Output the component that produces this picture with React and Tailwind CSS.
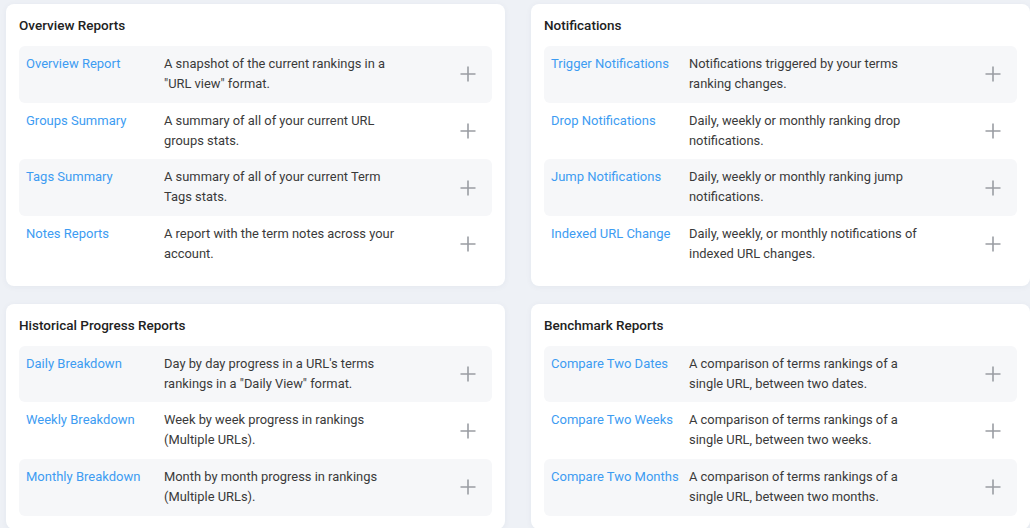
const sections = [
  {
    title: "Overview Reports",
    rows: [
      ["Overview Report", ["A snapshot of the current rankings in a", '"URL view" format.']],
      ["Groups Summary", ["A summary of all of your current URL", "groups stats."]],
      ["Tags Summary", ["A summary of all of your current Term", "Tags stats."]],
      ["Notes Reports", ["A report with the term notes across your", "account."]],
    ],
  },
  {
    title: "Notifications",
    rows: [
      ["Trigger Notifications", ["Notifications triggered by your terms", "ranking changes."]],
      ["Drop Notifications", ["Daily, weekly or monthly ranking drop", "notifications."]],
      ["Jump Notifications", ["Daily, weekly or monthly ranking jump", "notifications."]],
      ["Indexed URL Change", ["Daily, weekly, or monthly notifications of", "indexed URL changes."]],
    ],
  },
  {
    title: "Historical Progress Reports",
    rows: [
      ["Daily Breakdown", ["Day by day progress in a URL's terms", 'rankings in a "Daily View" format.']],
      ["Weekly Breakdown", ["Week by week progress in rankings", "(Multiple URLs)."]],
      ["Monthly Breakdown", ["Month by month progress in rankings", "(Multiple URLs)."]],
    ],
  },
  {
    title: "Benchmark Reports",
    rows: [
      ["Compare Two Dates", ["A comparison of terms rankings of a", "single URL, between two dates."]],
      ["Compare Two Weeks", ["A comparison of terms rankings of a", "single URL, between two weeks."]],
      ["Compare Two Months", ["A comparison of terms rankings of a", "single URL, between two months."]],
    ],
  },
];

function Plus() {
  return (
    <svg width="16" height="16" viewBox="0 0 16 16" className="shrink-0">
      <path d="M8 0.5V15.5M0.5 8H15.5" stroke="#9a9da3" strokeWidth="1.6" fill="none" />
    </svg>
  );
}

function Card({ title, rows }) {
  return (
    <div className="bg-white rounded-[8px] shadow-[0_1px_6px_rgba(30,50,90,0.05)] pt-[11px] pb-[13px] px-[13px]">
      <div className="text-[13.5px] leading-5 font-medium text-[#222222] font-['Roboto',sans-serif] mb-[11px]">{title}</div>
      <div className="flex flex-col">
        {rows.map(([name, desc], i) => (
          <div
            key={name}
            className={`flex items-center rounded-[6px] h-[56.67px] pl-[7px] pr-[16px] ${i % 2 === 0 ? "bg-[#f6f7f9]" : ""}`}
          >
            <div className="self-start pt-[8px] w-[138px] shrink-0 text-[13px] leading-5 text-[#3d9cf2] font-['Roboto',sans-serif]">{name}</div>
            <div className="self-start pt-[8px] flex-1 text-[12.9px] leading-5 text-[#3a3a3a] font-['Roboto',sans-serif]">
              {desc[0]}
              <br />
              {desc[1]}
            </div>
            <Plus />
          </div>
        ))}
      </div>
    </div>
  );
}

export default function App() {
  return (
    <div className="w-[1030px] h-[528px] overflow-hidden bg-[#eef1f6] pl-[6px] pt-[4px]">
      <div className="grid grid-cols-2 gap-x-[26px] gap-y-[18px]">
        {sections.map((s) => (
          <Card key={s.title} {...s} />
        ))}
      </div>
    </div>
  );
}
